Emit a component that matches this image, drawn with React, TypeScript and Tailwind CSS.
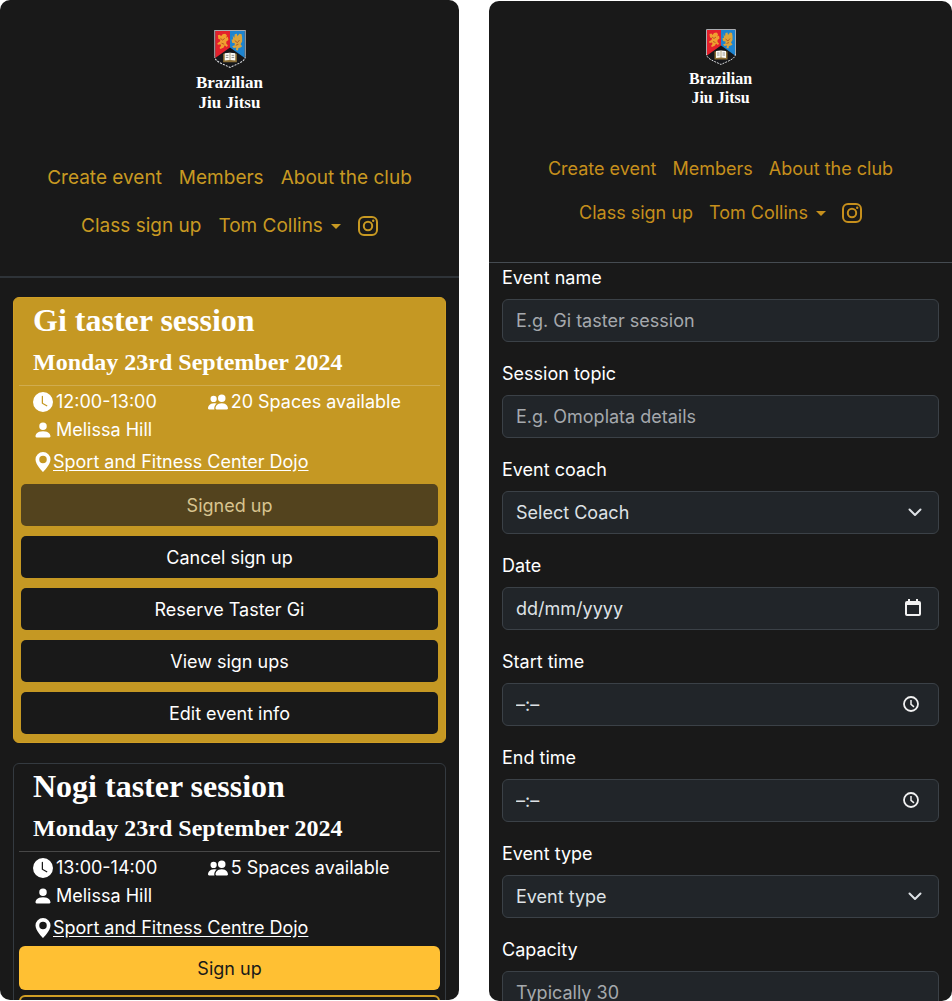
import type { ReactNode } from "react";
import { BsClockFill, BsGeoAltFill, BsPeopleFill, BsPersonFill } from "react-icons/bs";

function Crest({ className }: { className: string }) {
  return (
    <svg viewBox="0 0 60 72" className={className} aria-hidden="true">
      <path d="M1 1H59V50C59 60 44 64 30 71C16 64 1 60 1 50Z" fill="#15161a" />
      <path d="M2 2H30V33L2 53Z" fill="#e3202c" />
      <path d="M58 2H30V33L58 53Z" fill="#1d84d0" />
      <path
        d="M7 10l4-1 2 3 3-4 5-1 3 3-1 5 3-2 1 6-4 3 0 4 3 3-2 3-4-3-2 4-6 3-2-2 3-4-1-3-5 1-1-3 5-3 1-4-4-1Z"
        fill="#f0a030"
      />
      <path
        d="M35 10l3 5 1-7 4-1 1 5 4-5 4 1 1 6 0 8-3 5 3 4-3 2-4 1-1 5-4-1 1-5-5 1-3-3 5-2 0-4-5-1-1-6 3 0Z"
        fill="#dba53c"
      />
      <path d="M12 16l4 3 4-3M14 25l5 2M39 20l5 4 4-5M41 29l5-2" stroke="#a8471f" strokeWidth="1.5" fill="none" />
      <path d="M17 45H43V61H17Z" fill="#8c6f35" />
      <path d="M20 44L29 43H31L40 44V58L31 57H29L20 58Z" fill="#fbfaf5" />
      <path d="M30 43V58" stroke="#9a8a62" strokeWidth="1.5" />
      <path d="M22 48h5M22 52h5M33 48h5M33 52h5" stroke="#777" strokeWidth="1.5" />
      <path d="M59 50C59 60 44 64 30 71C16 64 1 60 1 50" fill="none" stroke="#d5d7d9" strokeWidth="2" strokeDasharray="4 2" />
      <path d="M1 50V1H59V50" fill="none" stroke="#a9acb0" strokeWidth="2" />
    </svg>
  );
}

function InstagramIcon() {
  return (
    <svg viewBox="0 0 20 20" className="h-5 w-5" fill="none" stroke="currentColor" strokeWidth="2" aria-hidden="true">
      <rect x="1" y="1" width="18" height="18" rx="5" />
      <circle cx="10" cy="10" r="4.2" />
      <circle cx="15.2" cy="4.8" r="1.2" fill="currentColor" stroke="none" />
    </svg>
  );
}

function ChevronIcon() {
  return (
    <svg
      viewBox="0 0 16 16"
      className="pointer-events-none absolute top-[13px] right-4 h-4 w-4 text-[#dee2e6]"
      fill="none"
      stroke="currentColor"
      strokeWidth="2"
      strokeLinecap="round"
      strokeLinejoin="round"
      aria-hidden="true"
    >
      <path d="M2.5 5.5 8 11l5.500-5.500" />
    </svg>
  );
}

function CalendarIcon() {
  return (
    <svg viewBox="0 0 16 18" className="pointer-events-none absolute top-3 right-[18px] h-[18px] w-4" aria-hidden="true">
      <path d="M3 0H5V2H11V0H13V2H14A2 2 0 0 1 16 4V15A2 2 0 0 1 14 17H2A2 2 0 0 1 0 15V4A2 2 0 0 1 2 2H3ZM2 6V15H14V6Z" fill="#f1f1f1" fillRule="evenodd" />
    </svg>
  );
}

function ClockIcon() {
  return (
    <svg
      viewBox="0 0 16 16"
      className="pointer-events-none absolute top-[13px] right-5 h-4 w-4"
      fill="none"
      stroke="#f1f1f1"
      aria-hidden="true"
    >
      <circle cx="8" cy="8" r="7" strokeWidth="1.800" />
      <path d="M8 4V8.300L11 10.800" strokeWidth="1.500" />
    </svg>
  );
}

function NavLink({ children }: { children: ReactNode }) {
  return (
    <a href="#" className="flex items-center">
      {children}
    </a>
  );
}

function NavItems() {
  return (
    <>
      <NavLink>Create event</NavLink>
      <NavLink>Members</NavLink>
      <NavLink>About the club</NavLink>
      <NavLink>Class sign up</NavLink>
      <button type="button" className="flex items-center gap-2">
        Tom Collins
        <svg viewBox="0 0 10 5" className="h-[5px] w-[10px]" fill="currentColor" aria-hidden="true">
          <path d="M0 0H10L5 5Z" />
        </svg>
      </button>
      <a href="#" aria-label="Instagram" className="flex items-center">
        <InstagramIcon />
      </a>
    </>
  );
}

type Session = { title: string; date: string; time: string; spaces: string; coach: string; place: string };

function SessionDetails({ session }: { session: Session }) {
  return (
    <>
      <h2 className="px-[14px] pt-1 font-['Liberation_Serif',serif] text-[32px] leading-9 font-bold">{session.title}</h2>
      <h3 className="mt-2 px-[14px] pb-[7px] font-['Liberation_Serif',serif] text-[24px] leading-8 font-bold">
        {session.date}
      </h3>
      <div className="grid grid-cols-[4fr_5fr] border-t border-white/20 px-[14px] pt-[2px] text-[18px] leading-7">
        <p className="flex items-center gap-[3px]">
          <BsClockFill size={20} />
          {session.time}
        </p>
        <p className="flex items-center gap-[3px]">
          <BsPeopleFill size={20} />
          {session.spaces}
        </p>
        <p className="flex items-center gap-[3px]">
          <BsPersonFill size={20} />
          {session.coach}
        </p>
        <p className="col-span-2 flex h-9 items-center">
          <BsGeoAltFill size={20} />
          <a href="#" className="underline underline-offset-2">
            {session.place}
          </a>
        </p>
      </div>
    </>
  );
}

function DarkButton({ children, disabled }: { children: ReactNode; disabled?: boolean }) {
  return (
    <button
      type="button"
      disabled={disabled}
      className="h-[42px] w-full rounded-[5px] bg-[#191919] text-[18px] text-white disabled:bg-[#53431e] disabled:text-[#d8c48f]"
    >
      {children}
    </button>
  );
}

const fieldClass =
  "h-[43px] w-full appearance-none rounded-md border border-[#3b4147] bg-[#212529] px-[13px] text-[18px] text-[#dee2e6] outline-none";

function Field({ id, label, children }: { id: string; label: string; children: ReactNode }) {
  return (
    <div className="mb-[18px]">
      <label htmlFor={id} className="mb-2 block text-[18px] leading-[27px] text-white">
        {label}
      </label>
      <div className="relative">{children}</div>
    </div>
  );
}

function SelectField({ id, label, option }: { id: string; label: string; option: string }) {
  return (
    <Field id={id} label={label}>
      <select id={id} className={fieldClass}>
        <option>{option}</option>
      </select>
      <ChevronIcon />
    </Field>
  );
}

function TimeField({ id, label }: { id: string; label: string }) {
  return (
    <Field id={id} label={label}>
      <input id={id} placeholder="–:–" className={`${fieldClass} placeholder:text-[#dee2e6]`} />
      <ClockIcon />
    </Field>
  );
}

const giSession: Session = {
  title: "Gi taster session",
  date: "Monday 23rd September 2024",
  time: "12:00-13:00",
  spaces: "20 Spaces available",
  coach: "Melissa Hill",
  place: "Sport and Fitness Center Dojo",
};

const nogiSession: Session = {
  title: "Nogi taster session",
  date: "Monday 23rd September 2024",
  time: "13:00-14:00",
  spaces: "5 Spaces available",
  coach: "Melissa Hill",
  place: "Sport and Fitness Centre Dojo",
};

export default function App() {
  return (
    <div className="grid h-screen grid-cols-[459fr_463fr] gap-[30px] overflow-hidden bg-white font-['Inter',sans-serif]">
      <section className="mb-px overflow-hidden rounded-[10px] bg-[#191919] text-white">
        <header className="border-b-2 border-[#2e3338] pb-[26px]">
          <div className="flex flex-col items-center pt-[30px] font-['Liberation_Serif',serif] text-[17px] leading-5 font-bold">
            <Crest className="mb-[5px] h-[38px] w-8" />
            <p>Brazilian</p>
            <p>Jiu Jitsu</p>
          </div>
          <nav className="mt-[41px] flex flex-wrap justify-center gap-x-[17px] px-8 text-[19px] leading-[48px] text-[#c89922]">
            <NavItems />
          </nav>
        </header>
        <main className="px-[13px] pt-[19px]">
          <article className="rounded-md border border-[#d09e25] bg-[#c59823] px-[5px] pb-2">
            <SessionDetails session={giSession} />
            <div className="flex flex-col gap-[10px] px-[2px] pt-1">
              <DarkButton disabled>Signed up</DarkButton>
              <DarkButton>Cancel sign up</DarkButton>
              <DarkButton>Reserve Taster Gi</DarkButton>
              <DarkButton>View sign ups</DarkButton>
              <DarkButton>Edit event info</DarkButton>
            </div>
          </article>
          <article className="mt-5 rounded-md border border-[#343a40] px-[5px] pb-2">
            <SessionDetails session={nogiSession} />
            <div className="flex flex-col gap-[5px]">
              <button type="button" className="h-11 rounded-md bg-[#ffc033] text-[18px] text-[#191919]">
                Sign up
              </button>
              <button
                type="button"
                aria-label="View sign ups"
                className="h-11 rounded-md border-2 border-[#d09e25]"
              />
            </div>
          </article>
        </main>
      </section>

      <section className="mt-px overflow-hidden rounded-[10px] bg-[#191919] text-white">
        <header className="border-b border-[#454b51] pb-[27px]">
          <div className="flex flex-col items-center pt-7 font-['Liberation_Serif',serif] text-[16px] leading-[19px] font-bold">
            <Crest className="mb-1 h-9 w-[30px]" />
            <p>Brazilian</p>
            <p>Jiu Jitsu</p>
          </div>
          <nav className="mt-[40px] flex flex-wrap justify-center gap-x-4 px-10 text-[18px] leading-[44px] text-[#c68f1c]">
            <NavItems />
          </nav>
        </header>
        <form className="px-[13px] pt-px">
          <Field id="event-name" label="Event name">
            <input id="event-name" placeholder="E.g. Gi taster session" className={`${fieldClass} placeholder:text-[#a5a9ad]`} />
          </Field>
          <Field id="topic" label="Session topic">
            <input id="topic" placeholder="E.g. Omoplata details" className={`${fieldClass} placeholder:text-[#a5a9ad]`} />
          </Field>
          <SelectField id="coach" label="Event coach" option="Select Coach" />
          <Field id="date" label="Date">
            <input id="date" placeholder="dd/mm/yyyy" className={`${fieldClass} placeholder:text-[#dee2e6]`} />
            <CalendarIcon />
          </Field>
          <TimeField id="start" label="Start time" />
          <TimeField id="end" label="End time" />
          <SelectField id="type" label="Event type" option="Event type" />
          <Field id="capacity" label="Capacity">
            <input id="capacity" placeholder="Typically 30" className={`${fieldClass} placeholder:text-[#a5a9ad]`} />
          </Field>
        </form>
      </section>
    </div>
  );
}
